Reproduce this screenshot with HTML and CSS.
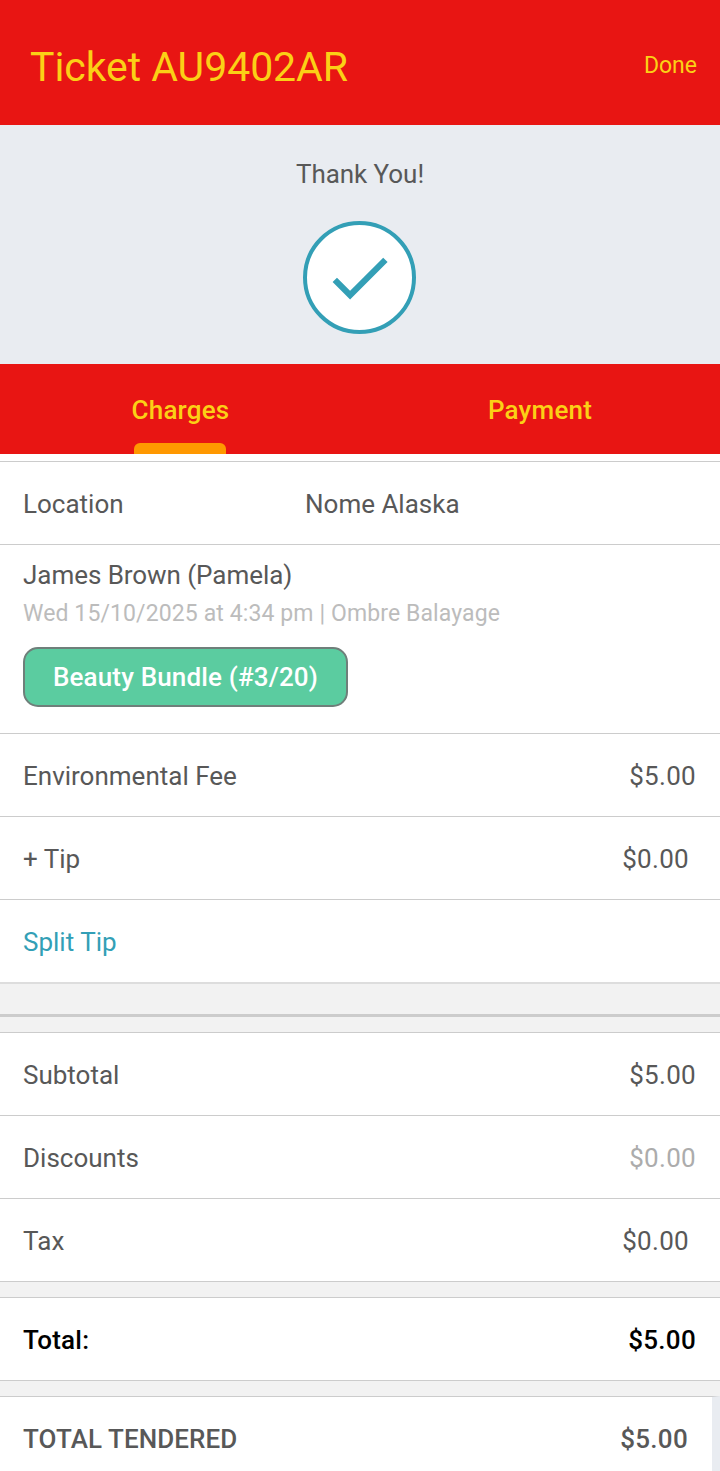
FILE: index.html
```html
<!DOCTYPE html>
<html lang="en">
<head>
<meta charset="utf-8">
<title>Ticket AU9402AR</title>
<link rel="stylesheet" href="styles.css">
</head>
<body>
<header class="header">
  <h1 class="title">Ticket AU9402AR</h1>
  <a class="done">Done</a>
</header>
<section class="thanks">
  <p class="thanks-text">Thank You!</p>
  <svg class="check" viewBox="0 0 114 114" width="114" height="114">
    <circle cx="56.5" cy="56.5" r="54.5" fill="#fff" stroke="#339fb6" stroke-width="4"/>
    <path d="M31.8 58.9 L47.1 74.2 L82.4 38.9" fill="none" stroke="#339fb6" stroke-width="6.2"/>
  </svg>
</section>
<nav class="tabs">
  <a class="tab active"><span class="tab-label">Charges</span></a>
  <a class="tab"><span class="tab-label">Payment</span></a>
</nav>
<main class="list">
  <div class="row location"><span class="name">Location</span><span>Nome Alaska</span></div>
  <div class="service">
    <p class="client">James Brown (Pamela)</p>
    <p class="detail">Wed 15/10/2025 at 4:34 pm | Ombre Balayage</p>
    <span class="bundle"><span class="bundle-text">Beauty Bundle (#3/20)</span></span>
  </div>
  <div class="row"><span>Environmental Fee</span><span class="amount">$5.00</span></div>
  <div class="row inset"><span>+ Tip</span><span class="amount">$0.00</span></div>
  <div class="row"><a class="link">Split Tip</a></div>
  <div class="divider"></div>
  <div class="row"><span>Subtotal</span><span class="amount">$5.00</span></div>
  <div class="row"><span>Discounts</span><span class="amount muted">$0.00</span></div>
  <div class="row inset"><span class="tax">Tax</span><span class="amount">$0.00</span></div>
  <div class="gap"></div>
  <div class="row total"><span class="total-label">Total:</span><span class="amount">$5.00</span></div>
  <div class="gap"></div>
  <div class="row tendered"><span class="tendered-label">TOTAL TENDERED</span><span class="amount">$5.00</span></div>
</main>
</body>
</html>
```
FILE: styles.css
```css
* { box-sizing: border-box; }
body {
  margin: 0;
  height: 1471px;
  overflow: hidden;
  background: #fff;
  color: #585858;
  font: 400 26px/30px Roboto, sans-serif;
}
p, h1 { margin: 0; font-weight: 400; }
.header {
  height: 125px;
  padding: 9px 23px 0 30px;
  display: flex;
  align-items: center;
  justify-content: space-between;
  background: #e81513;
  color: #fbd016;
}
.title { font-size: 41px; line-height: 48px; letter-spacing: -0.05px; }
.done { font-size: 23px; line-height: 28px; margin-top: -2px; }
.thanks {
  height: 239px;
  padding-top: 34px;
  display: flex;
  flex-direction: column;
  align-items: center;
  background: #e9ecf1;
}
.thanks-text { letter-spacing: -0.05px; }
.check { display: block; margin-top: 32px; }
.tabs {
  height: 90px;
  display: flex;
  background: #e81513;
  color: #fbd016;
  font-weight: 500;
  letter-spacing: 0.2px;
}
.tab {
  flex: 1;
  padding-top: 31px;
  display: flex;
  flex-direction: column;
  align-items: center;
  justify-content: space-between;
}
.tab.active .tab-label { padding-left: 1px; }
.tab.active::after {
  content: "";
  width: 92px;
  height: 11px;
  border-radius: 6px 6px 0 0;
  background: #ff9800;
}
.list { padding-top: 7px; }
.row {
  height: 83px;
  padding: 1px 24px 0 23px;
  display: flex;
  align-items: center;
  justify-content: space-between;
  border-top: 1px solid #ccc;
  background: #fff;
}
.row.inset { padding-right: 31px; }
.amount { letter-spacing: 0.3px; }
.location { justify-content: flex-start; }
.name { width: 282px; }
.tax { letter-spacing: 0.2px; }
.service {
  height: 189px;
  padding: 15px 23px 0;
  border-top: 1px solid #ccc;
}
.client { letter-spacing: -0.05px; }
.detail { margin-top: 10px; font-size: 23px; line-height: 28px; letter-spacing: 0.11px; color: #bcbcbc; }
.bundle {
  width: 325px;
  height: 60px;
  margin-top: 19px;
  display: flex;
  align-items: center;
  justify-content: center;
  border: 2px solid #6f7f7a;
  border-radius: 15px;
  background: #5bcca0;
  color: #fff;
  font-weight: 500;
  letter-spacing: 0.15px;
}
.link { color: #339fb6; }
.muted { color: #acacac; }
.divider {
  height: 50px;
  padding-top: 30px;
  border-top: 2px solid #ddd;
  background: #f2f2f2;
}
.divider::after { content: ""; display: block; height: 3px; background: #ccc; }
.gap { height: 16px; border-top: 1px solid #ccc; background: #f2f2f2; }
.total, .tendered { font-weight: 500; }
.total { color: #000; }
.total-label { letter-spacing: 0.2px; }
.tendered-label { letter-spacing: 0.08px; }
.tendered { border-right: 8px solid #e9ecf1; }
```
